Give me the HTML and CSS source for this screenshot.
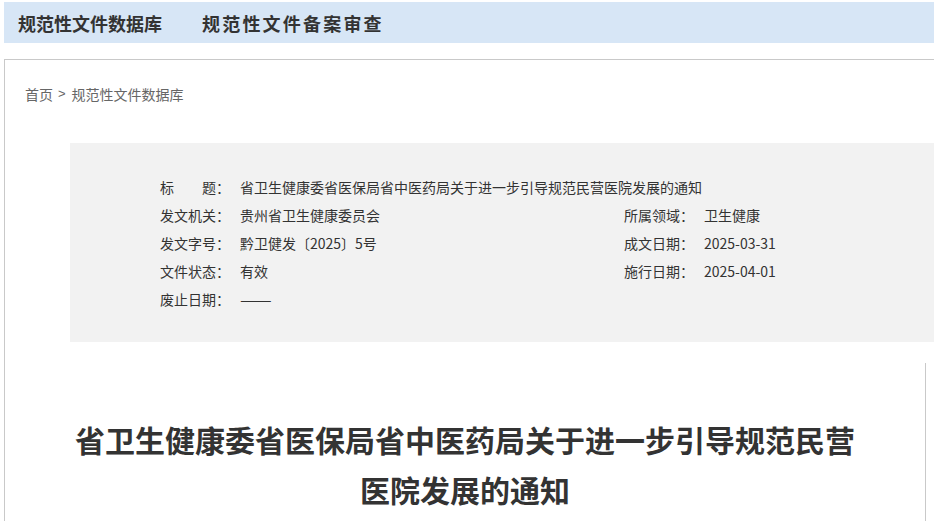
FILE: index.html
```html
<!DOCTYPE html>
<html lang="zh-CN">
<head>
<meta charset="utf-8">
<title>规范性文件数据库</title>
<link rel="stylesheet" href="styles.css">
</head>
<body>
<nav class="topnav">
  <a class="nav-item">规范性文件数据库</a>
  <a class="nav-item nav-wide">规范性文件备案审查</a>
</nav>
<main class="frame">
  <div class="crumb"><span>首页</span><span class="sep">&gt;</span><span>规范性文件数据库</span></div>
  <section class="info">
    <div class="row full"><span class="lbl">标　　题：</span><span class="val">省卫生健康委省医保局省中医药局关于进一步引导规范民营医院发展的通知</span></div>
    <div class="row"><span class="lbl">发文机关：</span><span class="val">贵州省卫生健康委员会</span></div>
    <div class="row"><span class="lbl">所属领域：</span><span class="val">卫生健康</span></div>
    <div class="row"><span class="lbl">发文字号：</span><span class="val">黔卫健发〔2025〕5号</span></div>
    <div class="row"><span class="lbl">成文日期：</span><span class="val">2025-03-31</span></div>
    <div class="row"><span class="lbl">文件状态：</span><span class="val">有效</span></div>
    <div class="row"><span class="lbl">施行日期：</span><span class="val">2025-04-01</span></div>
    <div class="row full"><span class="lbl">废止日期：</span><span class="val dash">——</span></div>
  </section>
  <article class="content">
    <h1 class="doc-title">省卫生健康委省医保局省中医药局关于进一步引导规范民营医院发展的通知</h1>
  </article>
</main>
</body>
</html>
```
FILE: styles.css
```css
html, body {
  margin: 0;
  padding: 0;
  overflow: hidden;
  background: #fff;
}
body {
  font-family: "Microsoft YaHei", "Noto Sans CJK SC", "Noto Sans", sans-serif;
  color: #333;
  width: 934px;
  height: 521px;
}
.topnav {
  margin: 2px 0 0 4px;
  height: 41px;
  width: 930px;
  background: #d7e6f6;
  display: flex;
  align-items: center;
  padding-left: 14px;
  box-sizing: border-box;
}
.nav-item {
  font-size: 18px;
  font-weight: bold;
  color: #333;
  line-height: 24px;
}
.nav-wide {
  margin-left: 40px;
  letter-spacing: 2.2px;
}
.frame {
  margin: 16px 0 0 4px;
  width: 930px;
  border-top: 1px solid #c9c9c9;
  border-left: 1px solid #c9c9c9;
  height: 462px;
  box-sizing: border-box;
  overflow: hidden;
}
.crumb {
  padding: 24px 0 0 20px;
  font-size: 14px;
  line-height: 20px;
  color: #666;
  display: flex;
  align-items: center;
}
.crumb .sep {
  margin: 0 6px 0 5px;
  font-family: "Liberation Sans", sans-serif;
  font-size: 13px;
}
.info {
  margin: 39px 0 0 65px;
  background: #f2f2f2;
  padding: 30px 0 29px 90px;
  display: grid;
  grid-template-columns: 464px 1fr;
  font-size: 14px;
  line-height: 28px;
}
.row {
  display: flex;
  white-space: nowrap;
}
.row.full {
  grid-column: 1 / -1;
}
.lbl {
  width: 80px;
  flex: none;
}
.val {
  color: #333;
}
.dash {
  display: inline-block;
  transform: scaleX(1.35);
  transform-origin: left center;
}
.content {
  margin-top: 21px;
  width: 921px;
  border-right: 1px solid #c9c9c9;
  box-sizing: border-box;
  padding-top: 51px;
  height: 200px;
}
.doc-title {
  margin: 0 auto;
  width: 800px;
  text-align: center;
  font-size: 30px;
  line-height: 50px;
  font-weight: bold;
  color: #333;
}
```
